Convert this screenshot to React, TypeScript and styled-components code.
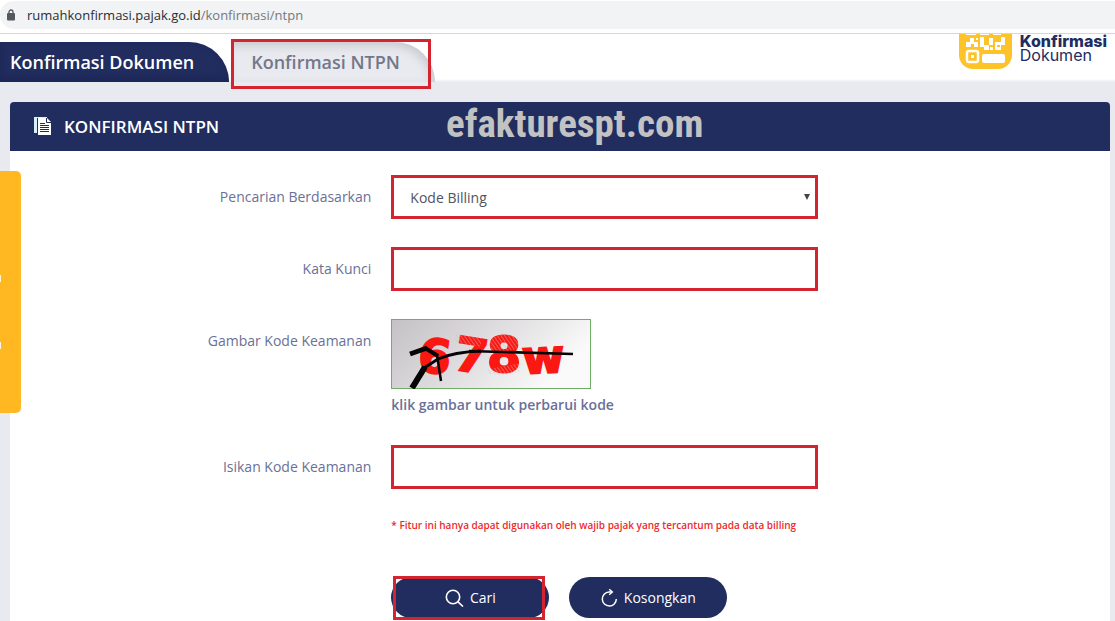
import React from "react";
import styled, { createGlobalStyle, css } from "styled-components";

const navy = "#212c5f";
const red = "#d3242f";

const GlobalStyle = createGlobalStyle`
  * { box-sizing: border-box; }
  body { margin: 0; background: #e9eaef; font-family: "Open Sans", "Noto Sans", sans-serif; }
`;

const Page = styled.div`
  min-height: 100vh;
  display: flex;
  flex-direction: column;
`;

const AddressBar = styled.div`
  height: 34px;
  padding: 1px 0 4px;
  background: #fff;
  border-bottom: 1px solid #d5d6d9;
`;

const Address = styled.div`
  height: 28px;
  padding-left: 7px;
  display: flex;
  align-items: center;
  gap: 12px;
  background: #f1f3f4;
  border-radius: 14px 0 0 14px;
  font-size: 13px;
  color: #2b2d31;
`;

const Path = styled.span`
  color: #74787d;
`;

const Header = styled.header`
  height: 48px;
  display: flex;
  justify-content: space-between;
  background: linear-gradient(#fff 45px, #e9eaef 48px);
`;

const Tabs = styled.nav`
  display: flex;
  gap: 2px;
  padding-top: 8px;
`;

const Tab = styled.a<{ $primary?: boolean }>`
  position: relative;
  height: 40px;
  line-height: 40px;
  padding: 0 35px 0 ${(p) => (p.$primary ? 10 : 20)}px;
  border-radius: 0 40px 0 0;
  font-size: 18px;
  font-weight: 600;
  text-decoration: none;
  white-space: nowrap;
  color: ${(p) => (p.$primary ? "#fff" : "#74778a")};
  background: ${(p) => (p.$primary ? navy : "#e9eaef")};
  box-shadow: ${(p) =>
    p.$primary ? "inset 0 -3px 6px #1c2653" : "inset -3px 4px 10px #c9cad0"};
`;

const mark = css`
  content: "";
  position: absolute;
  border: 3px solid ${red};
  pointer-events: none;
`;

const MarkedTab = styled(Tab)`
  &::after {
    ${mark}
    inset: -3px 4px -7px 0;
  }
`;

const Brand = styled.div`
  display: flex;
  gap: 8px;
  padding-right: 8px;
`;

const BrandName = styled.div`
  font-family: Inter, sans-serif;
  font-size: 16px;
  line-height: 14px;
  color: ${navy};
  b { display: block; font-weight: 800; }
`;

const Panel = styled.main`
  flex: 1;
  margin: 20px 5px 0 10px;
  background: #fff;
  border-radius: 4px 4px 0 0;
`;

const PanelHead = styled.div`
  position: relative;
  height: 49px;
  padding-left: 24px;
  display: flex;
  align-items: center;
  gap: 12px;
  background: ${navy};
  border-radius: 4px 4px 0 0;
  color: #fff;
`;

const Title = styled.h1`
  margin: 0;
  font-size: 17px;
  font-weight: 600;
`;

const Watermark = styled.div`
  position: absolute;
  left: 436px;
  top: 0;
  line-height: 44px;
  font-family: "Roboto Condensed", "Liberation Sans Narrow", sans-serif;
  font-size: 39px;
  font-weight: 700;
  color: #c2c2c2;
`;

const Form = styled.form`
  display: flex;
  flex-direction: column;
  gap: 28px;
  padding: 24px 14px 0;
`;

const Row = styled.div`
  display: grid;
  grid-template-columns: minmax(0, 4fr) minmax(0, 5fr) minmax(0, 3fr);
  > * { margin: 0 10px; min-width: 0; }
`;

const Label = styled.label`
  line-height: 44px;
  text-align: right;
  font-size: 14px;
  color: #6a7098;
`;

const field = css`
  height: 44px;
  border: 3px solid ${red};
  border-radius: 0;
  background: #fff;
  font: 14px "Open Sans", sans-serif;
  color: #50555f;
  outline: none;
`;

const Input = styled.input`
  ${field}
  padding: 0 16px;
`;

const SelectBox = styled.div`
  display: grid;
  align-items: center;
  > * { grid-area: 1 / 1; }
  svg { justify-self: end; margin-right: 8px; pointer-events: none; }
`;

const Select = styled.select`
  ${field}
  appearance: none;
  width: 100%;
  padding: 0 16px;
`;

const Second = styled.div`
  grid-column: 2;
`;

const CaptchaButton = styled.button`
  display: block;
  padding: 0;
  border: 0;
  background: none;
  cursor: pointer;
  svg { display: block; }
`;

const Caption = styled.div`
  margin-top: 4px;
  line-height: 24px;
  font-size: 14px;
  font-weight: 600;
  color: #6a7098;
`;

const Note = styled.div`
  line-height: 16px;
  margin-bottom: 16px;
  font-size: 10px;
  font-weight: 600;
  white-space: nowrap;
  color: #ee2a2a;
`;

const Actions = styled.div`
  grid-column: 2;
  display: flex;
  gap: 20px;
`;

const Button = styled.button`
  position: relative;
  flex: none;
  width: 158px;
  height: 41px;
  padding: 0;
  display: flex;
  align-items: center;
  justify-content: center;
  gap: 6px;
  border: 0;
  border-radius: 21px;
  background: ${navy};
  color: #fff;
  font: 14px "Open Sans", sans-serif;
`;

const MarkedButton = styled(Button)`
  &::after {
    ${mark}
    inset: -1px 4px -2px 2px;
  }
`;

const SideTab = styled.aside`
  position: absolute;
  left: 0;
  top: 171px;
  width: 21px;
  height: 242px;
  border-radius: 0 5px 5px 0;
  background: #ffb822;
  padding-top: 104px;
`;

const Sliver = styled.i`
  display: block;
  width: 1px;
  height: 7px;
  margin-bottom: 60px;
  background: #fff6dc;
`;

function Lock() {
  return (
    <svg width="8" height="12" viewBox="0 0 8 12">
      <path d="M2 5V3a2 2 0 0 1 4 0v2" fill="none" stroke="#55585c" strokeWidth="1.3" />
      <rect y="4" width="8" height="7.5" rx="1" fill="#55585c" />
    </svg>
  );
}

function BrandIcon() {
  return (
    <svg width="53" height="35" viewBox="0 0 53 35">
      <path d="M0 0h53v21a14 14 0 0 1-14 14H14A14 14 0 0 1 0 21z" fill="#fdc328" />
      <g fill="#fff">
        <path d="M7 0h10v1H7zM21 0h9v1h-9zM34 0h8v1h-8z" />
        <path d="M11 4h4v4h4v5h-4v-3h-3v3H7V8h4zM21 3h4v10h-4zM25 11h5v5h-5zM30 4h4v7h-4zM31 13h3v3h-3zM36 8h6V3h4v8h-4v5h-6zM17 4h2v2h-2z" />
        <rect x="23" y="20" width="23" height="9" rx="2" />
      </g>
      <rect x="8" y="17" width="11" height="11" rx="2" fill="none" stroke="#fff" strokeWidth="2.5" />
      <rect x="12" y="21" width="3" height="3" fill="#fff" />
      <path d="M38 11h3v2h-3z" fill="#fdc328" />
    </svg>
  );
}

function DocIcon() {
  return (
    <svg width="18" height="19" viewBox="0 0 18 19">
      <path d="M0 0h13v1H3v15H0z" fill="#d6f1fa" />
      <path d="M4 1h9l4 4v13H4z" fill="#fff" />
      <path d="M12.5 1v4.500H17" fill="none" stroke={navy} />
      <path d="M6 6.500h5M6 8.500h9M6 10.500h9M6 12.500h9M6 14.500h9" stroke={navy} />
    </svg>
  );
}

function SearchIcon() {
  return (
    <svg width="19" height="18" viewBox="0 0 19 18" fill="none" stroke="#fff" strokeWidth="1.6">
      <circle cx="8" cy="8" r="6.7" />
      <path d="M12.7 12.7L18 17.5" />
    </svg>
  );
}

function ResetIcon() {
  return (
    <svg width="17" height="18" viewBox="0 0 17 18" fill="none" stroke="#fff" strokeWidth="1.5">
      <path d="M10.5 3H8A7 7 0 1 0 15.3 10" />
      <path d="M8.2 .3L11.3 3L8.2 5.8" />
    </svg>
  );
}

function Captcha() {
  return (
    <svg width="200" height="70" viewBox="0 0 200 70" role="img" aria-label="678w">
      <defs>
        <linearGradient id="shade" x1="0" y1="0" x2="1" y2="0.35">
          <stop offset="0" stopColor="#c3c1c3" />
          <stop offset="0.5" stopColor="#dedcde" />
          <stop offset="1" stopColor="#fafafa" />
        </linearGradient>
        <pattern id="hatch" width="3" height="3" patternUnits="userSpaceOnUse" patternTransform="rotate(55)">
          <path d="M0 0H3" stroke="#d8b8b8" strokeWidth="0.9" />
        </pattern>
      </defs>
      <rect x="0.5" y="0.5" width="199" height="69" fill="url(#shade)" stroke="#70ae68" />
      <g fontFamily="DejaVu Sans, sans-serif" fontWeight="700" fill="#fb1712" stroke="#fb1712" strokeWidth="2">
        <text x="27" y="54" fontSize="47" transform="rotate(7 45 40)">6</text>
        <text x="64" y="53" fontSize="47" transform="rotate(9 80 36)">7</text>
        <text x="96" y="53" fontSize="49">8</text>
        <text x="131" y="54" fontSize="46" transform="rotate(-3 152 40)">w</text>
      </g>
      <path d="M64 15l26 4v9l-26-5zM98 20l15-6 14 5v11l-26 4zM97 50l32-6v9l-14 3-17-1z" fill="url(#hatch)" />
      <g fill="none" stroke="#050505">
        <path d="M19 35L36 29" strokeWidth="5" />
        <path d="M34 29L47 37" strokeWidth="4" />
        <path d="M46 36L50 62" strokeWidth="2.5" />
        <path d="M21 69L34 48" strokeWidth="6" />
        <path d="M33 49L47 40Q63 33 90 32" strokeWidth="3" />
        <path d="M78 32L182 35" strokeWidth="2.5" />
      </g>
    </svg>
  );
}

export default function App() {
  return (
    <Page>
      <GlobalStyle />
      <AddressBar>
        <Address>
          <Lock />
          <span>rumahkonfirmasi.pajak.go.id<Path>/konfirmasi/ntpn</Path></span>
        </Address>
      </AddressBar>
      <Header>
        <Tabs>
          <Tab href="#dokumen" $primary>Konfirmasi Dokumen</Tab>
          <MarkedTab href="#ntpn">Konfirmasi NTPN</MarkedTab>
        </Tabs>
        <Brand>
          <BrandIcon />
          <BrandName><b>Konfirmasi</b>Dokumen</BrandName>
        </Brand>
      </Header>
      <Panel>
        <PanelHead>
          <DocIcon />
          <Title>KONFIRMASI NTPN</Title>
          <Watermark>efakturespt.com</Watermark>
        </PanelHead>
        <Form onSubmit={(e) => e.preventDefault()}>
          <Row>
            <Label htmlFor="by">Pencarian Berdasarkan</Label>
            <SelectBox>
              <Select id="by"><option>Kode Billing</option></Select>
              <svg width="6" height="6" viewBox="0 0 6 6"><path d="M0 0h6L3 6z" fill="#444" /></svg>
            </SelectBox>
          </Row>
          <Row>
            <Label htmlFor="keyword">Kata Kunci</Label>
            <Input id="keyword" />
          </Row>
          <Row>
            <Label htmlFor="captcha">Gambar Kode Keamanan</Label>
            <div>
              <CaptchaButton id="captcha" type="button"><Captcha /></CaptchaButton>
              <Caption>klik gambar untuk perbarui kode</Caption>
            </div>
          </Row>
          <Row>
            <Label htmlFor="code">Isikan Kode Keamanan</Label>
            <Input id="code" />
          </Row>
          <Row>
            <Second>
              <Note>* Fitur ini hanya dapat digunakan oleh wajib pajak yang tercantum pada data billing</Note>
            </Second>
          </Row>
          <Row>
            <Actions>
              <MarkedButton type="submit"><SearchIcon />Cari</MarkedButton>
              <Button type="reset"><ResetIcon />Kosongkan</Button>
            </Actions>
          </Row>
        </Form>
      </Panel>
      <SideTab><Sliver /><Sliver /></SideTab>
    </Page>
  );
}
